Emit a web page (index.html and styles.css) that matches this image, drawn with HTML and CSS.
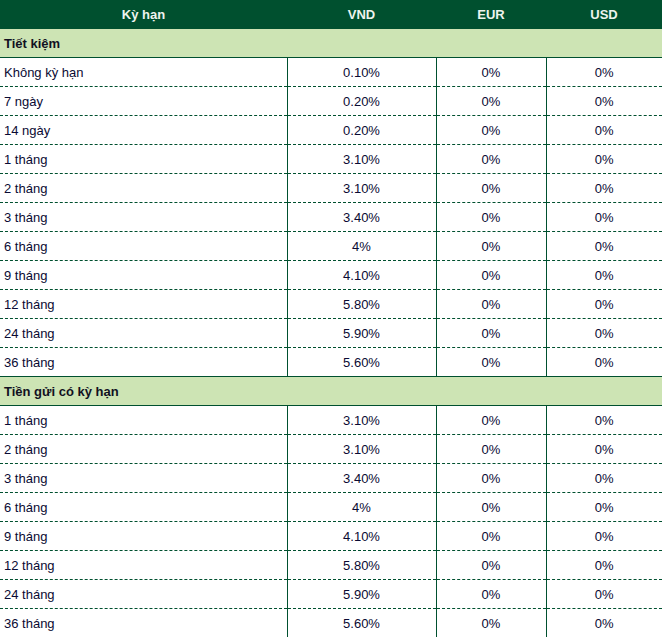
FILE: index.html
```html
<!DOCTYPE html>
<html lang="vi">
<head>
<meta charset="utf-8">
<link rel="stylesheet" href="styles.css">
</head>
<body>
<table class="rates">
  <colgroup>
    <col class="c-term"><col class="c-vnd"><col class="c-eur"><col class="c-usd">
  </colgroup>
  <thead>
    <tr class="head"><th>Kỳ hạn</th><th>VND</th><th>EUR</th><th>USD</th></tr>
  </thead>
  <tbody>
    <tr class="section"><td colspan="4">Tiết kiệm</td></tr>
    <tr><td>Không kỳ hạn</td><td>0.10%</td><td>0%</td><td>0%</td></tr>
    <tr><td>7 ngày</td><td>0.20%</td><td>0%</td><td>0%</td></tr>
    <tr><td>14 ngày</td><td>0.20%</td><td>0%</td><td>0%</td></tr>
    <tr><td>1 tháng</td><td>3.10%</td><td>0%</td><td>0%</td></tr>
    <tr><td>2 tháng</td><td>3.10%</td><td>0%</td><td>0%</td></tr>
    <tr><td>3 tháng</td><td>3.40%</td><td>0%</td><td>0%</td></tr>
    <tr><td>6 tháng</td><td>4%</td><td>0%</td><td>0%</td></tr>
    <tr><td>9 tháng</td><td>4.10%</td><td>0%</td><td>0%</td></tr>
    <tr><td>12 tháng</td><td>5.80%</td><td>0%</td><td>0%</td></tr>
    <tr><td>24 tháng</td><td>5.90%</td><td>0%</td><td>0%</td></tr>
    <tr class="last"><td>36 tháng</td><td>5.60%</td><td>0%</td><td>0%</td></tr>
    <tr class="section"><td colspan="4">Tiền gửi có kỳ hạn</td></tr>
    <tr><td>1 tháng</td><td>3.10%</td><td>0%</td><td>0%</td></tr>
    <tr><td>2 tháng</td><td>3.10%</td><td>0%</td><td>0%</td></tr>
    <tr><td>3 tháng</td><td>3.40%</td><td>0%</td><td>0%</td></tr>
    <tr><td>6 tháng</td><td>4%</td><td>0%</td><td>0%</td></tr>
    <tr><td>9 tháng</td><td>4.10%</td><td>0%</td><td>0%</td></tr>
    <tr><td>12 tháng</td><td>5.80%</td><td>0%</td><td>0%</td></tr>
    <tr><td>24 tháng</td><td>5.90%</td><td>0%</td><td>0%</td></tr>
    <tr><td>36 tháng</td><td>5.60%</td><td>0%</td><td>0%</td></tr>
  </tbody>
</table>
</body>
</html>
```
FILE: styles.css
```css
html, body {
  margin: 0;
  padding: 0;
  background: #ffffff;
}
.rates {
  width: 662px;
  border-collapse: collapse;
  table-layout: fixed;
  font-family: "Liberation Sans", Arial, sans-serif;
  font-size: 13px;
  color: #0a0a33;
}
.c-term { width: 287px; }
.c-vnd { width: 149px; }
.c-eur { width: 110px; }
.c-usd { width: 116px; }

.head th {
  height: 29px;
  padding: 0;
  background: #00502f;
  color: #eef4ee;
  font-weight: bold;
  font-size: 13px;
  text-align: center;
  vertical-align: middle;
}
.section td {
  height: 28px;
  padding: 0 0 0 4px;
  background: #cde4b4;
  border-bottom: 1px solid #00502f;
  font-weight: bold;
  font-size: 13px;
  color: #111122;
  text-align: left;
}
tbody tr td {
  height: 28px;
  padding: 0;
  text-align: center;
  vertical-align: middle;
  border-bottom: 1px dashed #00502f;
  border-left: 1px solid #00502f;
}
tbody tr td:first-child {
  text-align: left;
  padding-left: 4px;
  border-left: none;
}
tbody tr.last td {
  border-bottom: 1px solid #00502f;
}
```
